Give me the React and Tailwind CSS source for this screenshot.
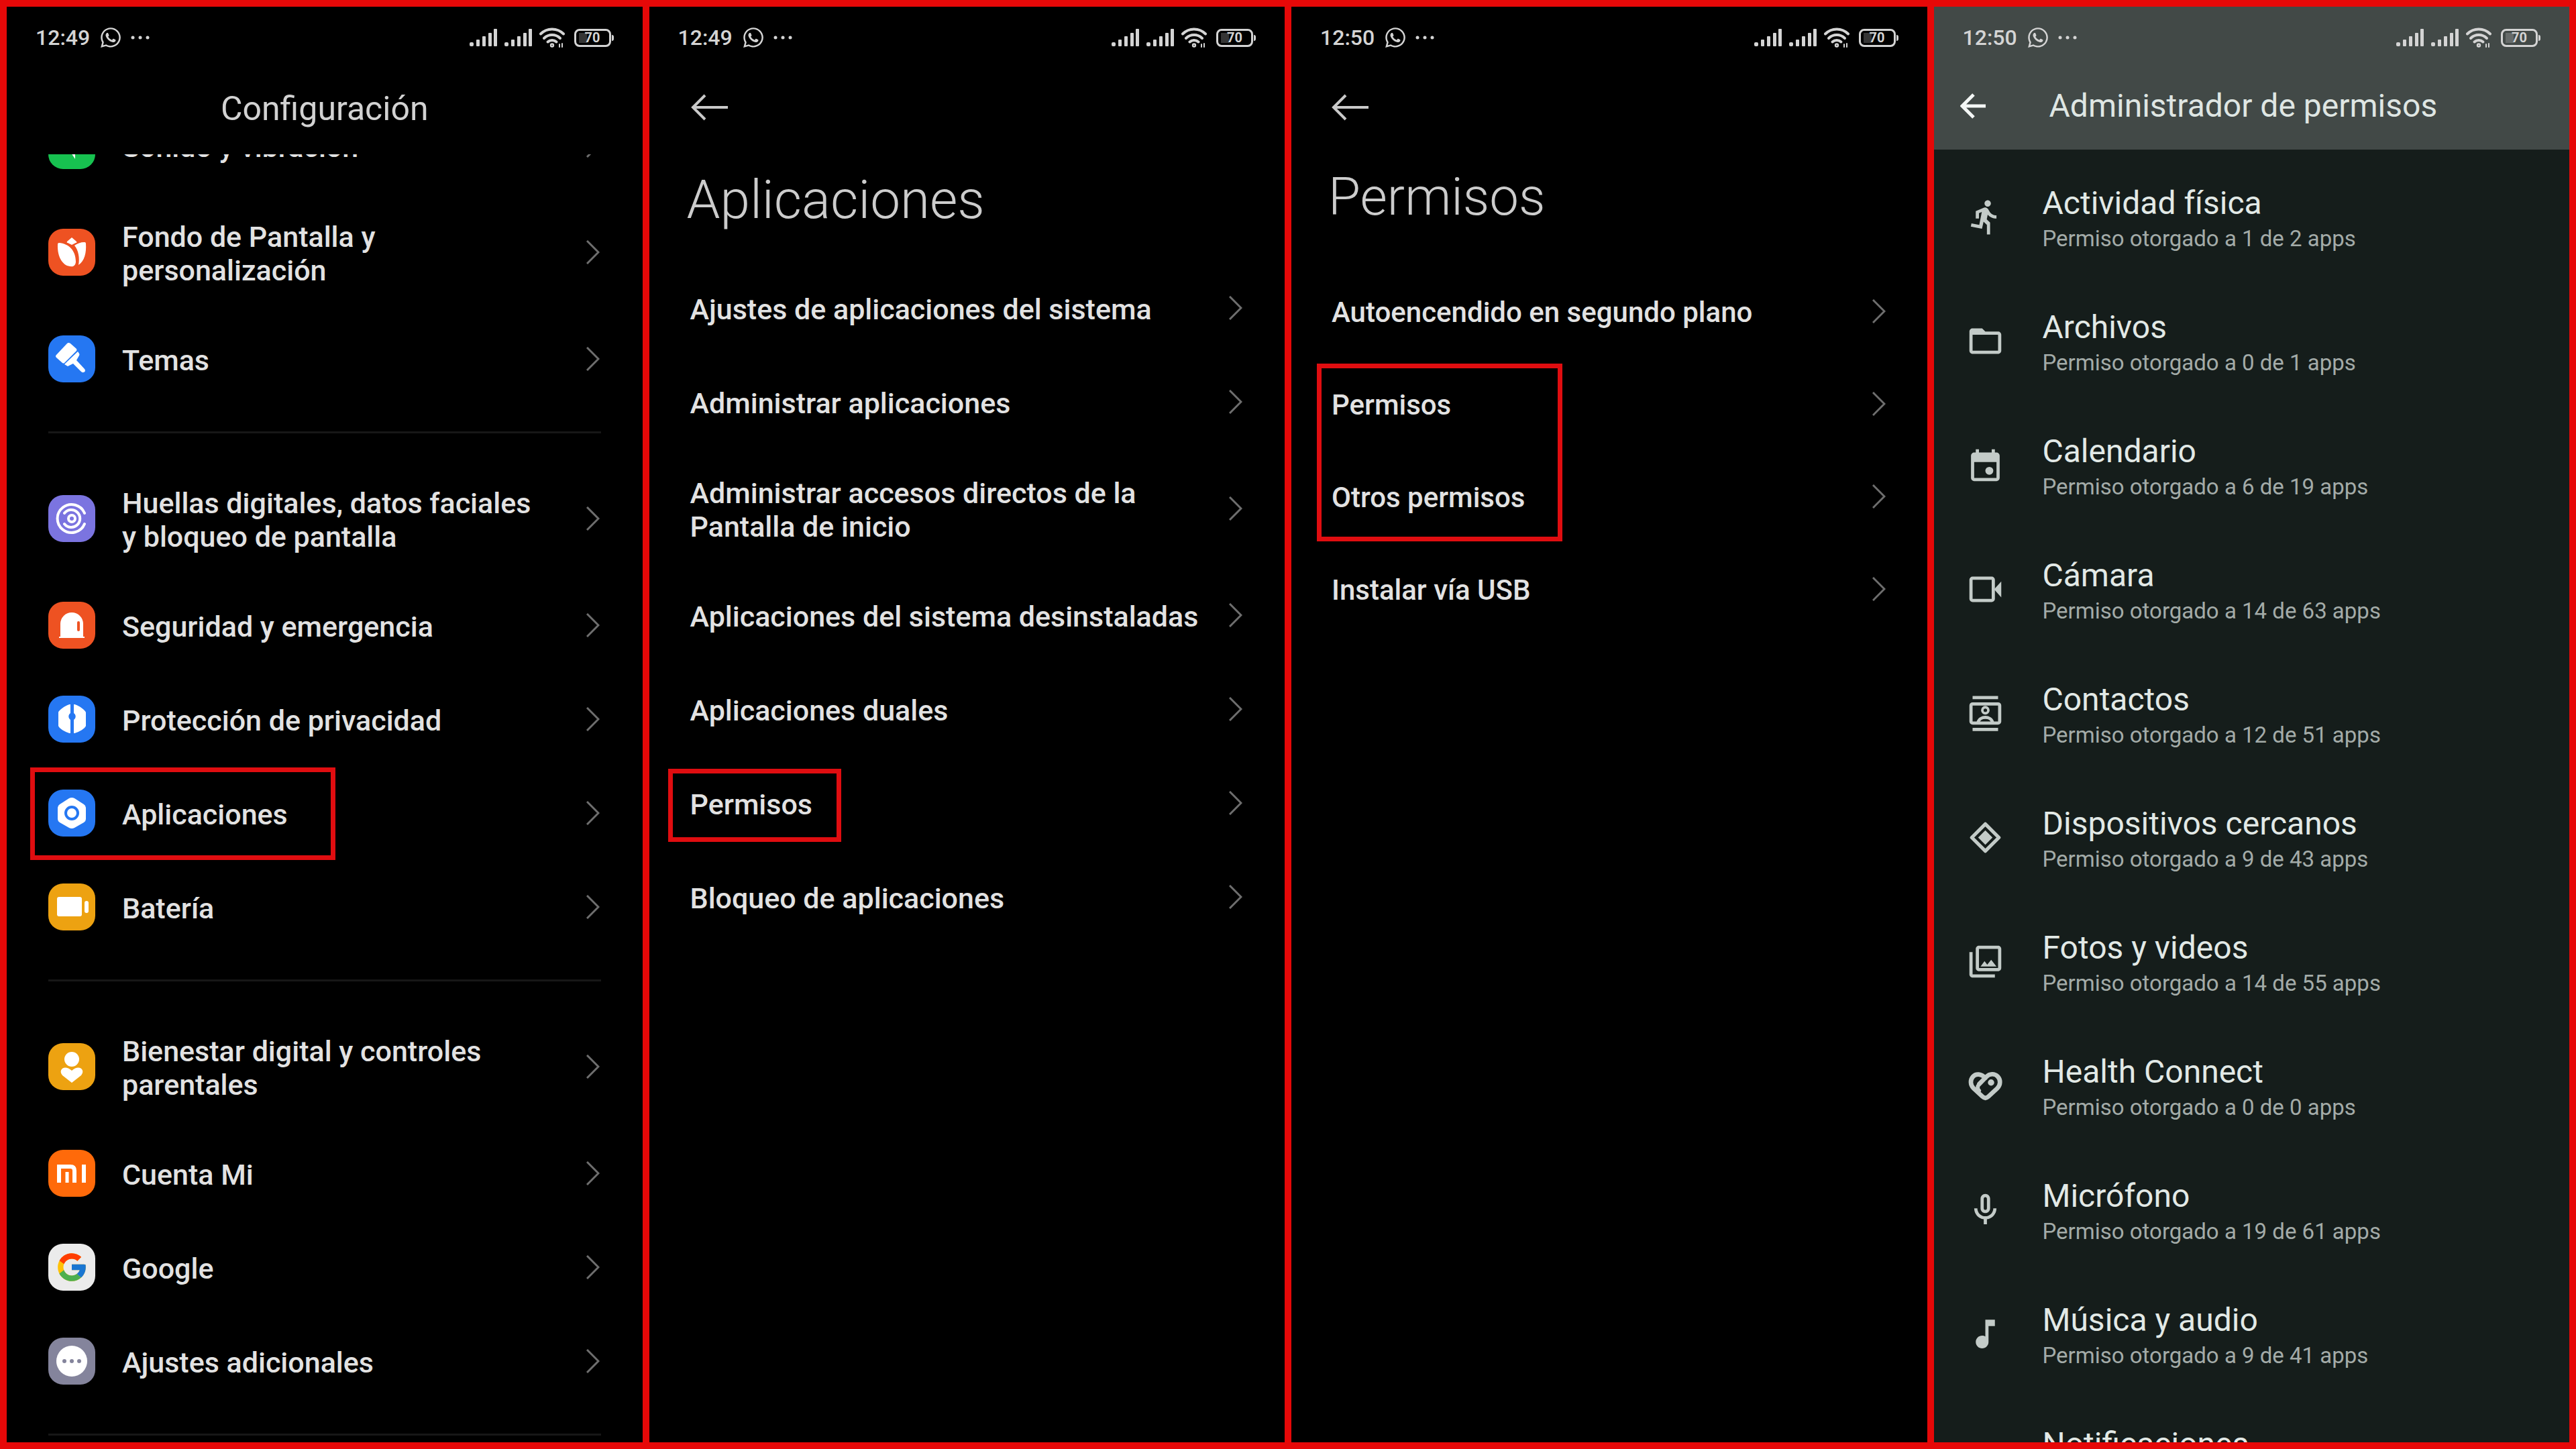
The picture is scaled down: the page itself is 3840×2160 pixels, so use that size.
import { FaWhatsapp } from "react-icons/fa";
import { FcGoogle } from "react-icons/fc";
import {
    MdDirectionsRun,
    MdFolderOpen,
    MdMusicNote,
    MdNotificationsNone,
    MdOutlineMicNone,
    MdOutlinePhotoLibrary,
} from "react-icons/md";

const SignalBars = () => (
    <svg viewBox="0 0 42 28" className="w-[42px] h-[28px]" fill="currentColor">
        <rect x="0" y="21" width="6" height="6" rx="2" />
        <rect x="10" y="17" width="5" height="10" rx="1" />
        <rect x="19" y="12" width="5" height="15" rx="1" />
        <rect x="28" y="7" width="5" height="20" rx="1" />
        <rect x="36" y="1" width="5" height="26" rx="1" />
    </svg>
);

const WifiSignal = () => (
    <svg viewBox="0 0 38 30" className="w-[38px] h-[30px]" fill="none" stroke="currentColor" strokeWidth="4" strokeLinecap="round">
        <path d="M2 9.500a24 24 0 0 1 34 0" />
        <path d="M7 16a17 17 0 0 1 24 0" />
        <path d="M12.500 21.500a9.500 9.500 0 0 1 13 0" />
        <circle cx="19" cy="26.500" r="1.200" />
        <path strokeWidth="2" d="M30 25v4M34 24v5" />
    </svg>
);

const Battery = () => (
    <div className="flex items-center ml-[4px]">
        <div className="relative flex items-center justify-center w-[55px] h-[27px] border-[3px] border-current rounded-[8px]">
            <span className="absolute left-[4px] w-[12px] h-[15px] bg-current opacity-25" />
            <span className="text-[20px] leading-[20px] font-bold">70</span>
        </div>
        <span className="w-[3px] h-[9px] ml-[1px] bg-current rounded-r-full" />
    </div>
);

const StatusBar = ({ time }) => (
    <div className="flex items-center justify-between h-[92px] px-[43px] shrink-0 text-[#d4d4d4]">
        <div className="flex items-center">
            <span className="text-[32px] leading-[40px] font-medium">{time}</span>
            <FaWhatsapp className="w-[34px] h-[34px] ml-[14px]" />
            <svg viewBox="0 0 28 6" className="w-[28px] h-[6px] ml-[13px]" fill="currentColor">
                <circle cx="3" cy="3" r="2.500" />
                <circle cx="14" cy="3" r="2.500" />
                <circle cx="25" cy="3" r="2.500" />
            </svg>
        </div>
        <div className="flex items-center gap-[10px]">
            <SignalBars />
            <SignalBars />
            <WifiSignal />
            <Battery />
        </div>
    </div>
);

const Chevron = () => (
    <svg viewBox="0 0 20 36" className="w-[20px] h-[36px] mr-[2px] shrink-0" fill="none" stroke="#6e6e6e" strokeWidth="3">
        <path d="M1 1l17 17L1 35" />
    </svg>
);

const tiles = {
    sound: {
        color: "bg-[#17c250]",
        art: <path d="M20 22h10l10-9v42L30 40H20z" />,
    },
    wallpaper: {
        color: "bg-[#ee5222]",
        art: (
            <>
                <path d="M35 13l7 6q1 2-1 2l-6 3-6-3q-2 0-1-2z" />
                <path d="M14 23q0-2 2-2c14 1 25 11 25 28q0 5-4 7c-13 2-24-11-23-33z" />
                <path d="M56 22q0-2-2-2c-6 0-11 2-15 5 6 7 8 19 6 29 9-6 12-18 11-32z" />
            </>
        ),
    },
    themes: {
        color: "bg-[#2577f2]",
        art: (
            <>
                <path d="M28 12q2-2 5 0l9 8q1 2 0 3L24 41q-1 1-3 0l-9-8q-2-2 0-4z" />
                <path d="M44 24l2 3q1 1 0 3l-4 7 12 13c3 4-2 7-5 4L37 42l-8 4-5-3z" />
            </>
        ),
    },
    fingerprint: {
        color: "bg-[#7b74e0]",
        art: (
            <g fill="none" stroke="#fff" strokeWidth="4" strokeLinecap="round">
                <path d="M54 27a21 21 0 1 0 0 16" />
                <path d="M24 27a13 13 0 1 1 0 16" />
                <circle cx="35" cy="35" r="5" />
            </g>
        ),
    },
    safety: {
        color: "bg-[#ee5222]",
        art: (
            <>
                <path d="M18 52V33a17 17 0 0 1 34 0v19h2v2H16v-2z" />
                <rect x="43" y="29" width="4" height="15" rx="2" fill="#ee5222" />
            </>
        ),
    },
    privacy: {
        color: "bg-[#2577f2]",
        art: (
            <>
                <path d="M33 13v13a6 6 0 0 0 0 10v20c-5 0-17-7-18-11V25c1-4 13-12 18-12z" />
                <path d="M38 13v13a6 6 0 0 1 0 10v20c5 0 17-7 18-11V25c-1-4-13-12-18-12z" />
            </>
        ),
    },
    apps: {
        color: "bg-[#2577f2]",
        art: (
            <>
                <path d="M31 13q4-2 8 0l14 9q3 2 3 5v17q0 3-3 5l-14 8q-4 2-8 0l-14-8q-3-2-3-5V27q0-3 3-5z" />
                <circle cx="35" cy="35" r="9" fill="none" stroke="#2577f2" strokeWidth="4" />
            </>
        ),
    },
    battery: {
        color: "bg-[#eda211]",
        art: (
            <>
                <rect x="13" y="20" width="37" height="29" rx="3" />
                <rect x="54" y="26" width="6" height="18" rx="3" />
            </>
        ),
    },
    wellbeing: {
        color: "bg-[#eda211]",
        art: (
            <>
                <circle cx="35" cy="24" r="11" />
                <path d="M35 59L21 48c-7-8 3-17 14-7 11-10 21-1 14 7z" />
            </>
        ),
    },
    mi: {
        color: "bg-[#ff6a0a]",
        art: (
            <g fill="none" stroke="#fff" strokeWidth="6">
                <path d="M16 49V25h17q6 0 6 6v18" />
                <path d="M28 33v16" strokeWidth="5" />
                <path d="M53 22v27" />
            </g>
        ),
    },
    google: {
        color: "bg-[#ebebeb]",
        art: <FcGoogle x="10" y="10" size={50} />,
    },
    more: {
        color: "bg-[#84849c]",
        art: (
            <>
                <circle cx="35" cy="35" r="23" />
                <g fill="#84849c">
                    <circle cx="24" cy="35" r="3" />
                    <circle cx="35" cy="35" r="3" />
                    <circle cx="46" cy="35" r="3" />
                </g>
            </>
        ),
    },
};

const Tile = ({ name }) => (
    <span className={`w-[70px] h-[70px] mr-[40px] rounded-[22px] shrink-0 overflow-hidden ${tiles[name].color}`}>
        <svg viewBox="0 0 70 70" className="w-full h-full" fill="#fff">
            {tiles[name].art}
        </svg>
    </span>
);

const Row = ({ icon, label, size = "min-h-[140px] text-[43px]", highlight }) => (
    <li className="relative">
        <button className={`flex items-center w-full text-left ${size}`}>
            {icon && <Tile name={icon} />}
            <span className={`pt-[41px] pb-[37px] leading-[50px] font-medium text-[#e2e2e2] ${icon ? "max-w-[630px]" : ""}`}>
                {label}
            </span>
            <span className="ml-auto">
                <Chevron />
            </span>
        </button>
        {highlight && <span className={`absolute border-[7px] border-[#e00d10] pointer-events-none ${highlight}`} />}
    </li>
);

const BackArrow = () => (
    <button aria-label="Atrás" className="flex">
        <svg viewBox="0 0 56 40" className="w-[56px] h-[40px]" fill="none" stroke="#c9c9c9" strokeWidth="4">
            <path d="M55 20H3M21 2L3 20l18 18" />
        </svg>
    </button>
);

const Panel = ({ children, color = "bg-black" }) => (
    <section className={`flex flex-col min-w-0 overflow-hidden ${color}`}>{children}</section>
);

const groups = [
    [
        { icon: "sound", label: "Sonido y vibración" },
        { icon: "wallpaper", label: "Fondo de Pantalla y personalización" },
        { icon: "themes", label: "Temas" },
    ],
    [
        { icon: "fingerprint", label: "Huellas digitales, datos faciales y bloqueo de pantalla" },
        { icon: "safety", label: "Seguridad y emergencia" },
        { icon: "privacy", label: "Protección de privacidad" },
        { icon: "apps", label: "Aplicaciones", highlight: "-left-[27px] top-[2px] bottom-0 w-[455px]" },
        { icon: "battery", label: "Batería" },
    ],
    [
        { icon: "wellbeing", label: "Bienestar digital y controles parentales" },
        { icon: "mi", label: "Cuenta Mi" },
        { icon: "google", label: "Google" },
        { icon: "more", label: "Ajustes adicionales" },
    ],
];

const SettingsPanel = () => (
    <Panel>
        <StatusBar time="12:49" />
        <header className="flex items-center justify-center h-[128px] pb-[8px] shrink-0">
            <h1 className="text-[50px] leading-[60px] text-[#d2d2d2]">Configuración</h1>
        </header>
        <div className="flex-1 min-h-0 overflow-hidden">
            {/* the list is already scrolled a little */}
            <div className="-mt-[83px] px-[62px]">
                {groups.map((rows, index) => (
                    <ul key={index} className="pb-[38px] mb-[38px] border-b-[3px] border-[#171717]">
                        {rows.map((row) => (
                            <Row key={row.label} {...row} />
                        ))}
                    </ul>
                ))}
            </div>
        </div>
    </Panel>
);

const appRows = [
    { label: "Ajustes de aplicaciones del sistema" },
    { label: "Administrar aplicaciones" },
    { label: "Administrar accesos directos de la Pantalla de inicio" },
    { label: "Aplicaciones del sistema desinstaladas" },
    { label: "Aplicaciones duales" },
    { label: "Permisos", highlight: "-left-[33px] top-[19px] bottom-[12px] w-[258px]" },
    { label: "Bloqueo de aplicaciones" },
];

const AppsPanel = () => (
    <Panel>
        <StatusBar time="12:49" />
        <nav className="flex items-center h-[116px] px-[62px]">
            <BackArrow />
        </nav>
        <h1 className="mt-[30px] mb-[41px] px-[56px] text-[80px] leading-[100px] font-light text-[#cccccc]">Aplicaciones</h1>
        <ul className="px-[61px]">
            {appRows.map((row) => (
                <Row key={row.label} {...row} />
            ))}
        </ul>
    </Panel>
);

const PermissionsPanel = () => (
    <Panel>
        <StatusBar time="12:50" />
        <nav className="flex items-center h-[116px] px-[60px]">
            <BackArrow />
        </nav>
        <h1 className="mt-[26px] mb-[51px] px-[55px] text-[78px] leading-[100px] font-light text-[#cccccc]">Permisos</h1>
        <ul className="px-[60px]">
            <Row label="Autoencendido en segundo plano" size="h-[138px] text-[42px]" />
            <Row
                label="Permisos"
                size="h-[138px] text-[42px]"
                highlight="-left-[22px] top-[9px] w-[366px] h-[265px]"
            />
            <Row label="Otros permisos" size="h-[138px] text-[42px]" />
            <Row label="Instalar vía USB" size="h-[138px] text-[42px]" />
        </ul>
    </Panel>
);

const CalendarIcon = ({ className }) => (
    <svg viewBox="0 0 24 24" className={className} fill="currentColor">
        <path fillRule="evenodd" d="M5 4h1V2h2v2h8V2h2v2h1a2 2 0 0 1 2 2v14a2 2 0 0 1-2 2H5a2 2 0 0 1-2-2V6a2 2 0 0 1 2-2zm0 6v10h14V10z" />
        <circle cx="14.500" cy="15.500" r="2.500" />
    </svg>
);

const VideoIcon = ({ className }) => (
    <svg viewBox="0 0 24 24" className={className} fill="currentColor">
        <rect x="3" y="5" width="14" height="14" rx="1" fill="none" stroke="currentColor" strokeWidth="2" />
        <path d="M17.500 12L22 7v10z" />
    </svg>
);

const ContactsIcon = ({ className }) => (
    <svg viewBox="0 0 24 24" className={className} fill="none" stroke="currentColor" strokeWidth="2">
        <path d="M4 2h16M4 22h16" />
        <rect x="3" y="6" width="18" height="12" rx="1" />
        <circle cx="12" cy="10" r="1.900" strokeWidth="1.600" />
        <path d="M7.500 17.500c1-4 8-4 9 0" />
    </svg>
);

const NearbyIcon = ({ className }) => (
    <svg viewBox="0 0 24 24" className={className} fill="currentColor">
        <path d="M12 3.500L20.500 12 12 20.500 3.500 12z" fill="none" stroke="currentColor" strokeWidth="2.200" strokeLinejoin="round" />
        <path d="M12 7.500l4.500 4.500-4.500 4.500L7.500 12z" />
    </svg>
);

const HealthIcon = ({ className }) => (
    <svg viewBox="0 0 24 24" className={className} fill="none" stroke="currentColor" strokeWidth="2.800" strokeLinecap="round" strokeLinejoin="round">
        <path d="M12 7.200C9.500 4.300 6 4.300 4.300 6.200c-2 2.200-1.700 5.300.2 7.300l5.700 5.300c1.200 1.100 2.500 1.100 3.700 0l5.700-5.300c1.900-2 2.200-5.100.2-7.300-2-2.100-5.200-1.900-7.200.2l-4.400 4.500" />
        <path d="M8.300 10.800c-1.500 1.700-1.300 3.200-.2 4.300" strokeWidth="2.400" />
        <circle cx="15.600" cy="10" r="1.200" fill="currentColor" strokeWidth="1.600" />
    </svg>
);

const permissions = [
    { Icon: MdDirectionsRun, name: "Actividad física", granted: 1, total: 2 },
    { Icon: MdFolderOpen, name: "Archivos", granted: 0, total: 1 },
    { Icon: CalendarIcon, name: "Calendario", granted: 6, total: 19 },
    { Icon: VideoIcon, name: "Cámara", granted: 14, total: 63 },
    { Icon: ContactsIcon, name: "Contactos", granted: 12, total: 51 },
    { Icon: NearbyIcon, name: "Dispositivos cercanos", granted: 9, total: 43 },
    { Icon: MdOutlinePhotoLibrary, name: "Fotos y videos", granted: 14, total: 55 },
    { Icon: HealthIcon, name: "Health Connect", granted: 0, total: 0 },
    { Icon: MdOutlineMicNone, name: "Micrófono", granted: 19, total: 61 },
    { Icon: MdMusicNote, name: "Música y audio", granted: 9, total: 41 },
    { Icon: MdNotificationsNone, name: "Notificaciones" },
];

const ManagerPanel = () => (
    <Panel color="bg-[#151d1b]">
        <header className="bg-[#424947] shrink-0">
            <StatusBar time="12:50" />
            <nav className="flex items-center h-[121px] pb-[10px] pl-[39px]">
                <button aria-label="Atrás" className="flex">
                    <svg viewBox="0 0 38 38" className="w-[38px] h-[38px]" fill="none" stroke="#f4f7f6" strokeWidth="5">
                        <path d="M38 19H4M20 2L3 19l17 17" />
                    </svg>
                </button>
                <h1 className="ml-[95px] text-[48px] leading-[60px] text-[#dfe6e3]">Administrador de permisos</h1>
            </nav>
        </header>
        <ul className="flex-1 min-h-0 pt-[52px] overflow-hidden">
            {permissions.map(({ Icon, name, granted, total }) => (
                <li key={name}>
                    <button className="flex items-start w-full h-[185px] pl-[48px] text-left">
                        <Icon className="w-[57px] h-[57px] mt-[20px] mr-[57px] shrink-0 text-[#c3cbc8]" />
                        <span className="block">
                            <span className="block text-[48px] leading-[56px] text-[#e2e9e6]">{name}</span>
                            {total !== undefined && (
                                <span className="block text-[33px] leading-[50px] text-[#a3aba8]">
                                    Permiso otorgado a {granted} de {total} apps
                                </span>
                            )}
                        </span>
                    </button>
                </li>
            ))}
        </ul>
    </Panel>
);

export default function App() {
    return (
        <main className="grid grid-cols-4 gap-[10px] h-screen p-[10px] overflow-hidden bg-[#e60808] font-[Roboto,sans-serif]">
            <SettingsPanel />
            <AppsPanel />
            <PermissionsPanel />
            <ManagerPanel />
        </main>
    );
}
